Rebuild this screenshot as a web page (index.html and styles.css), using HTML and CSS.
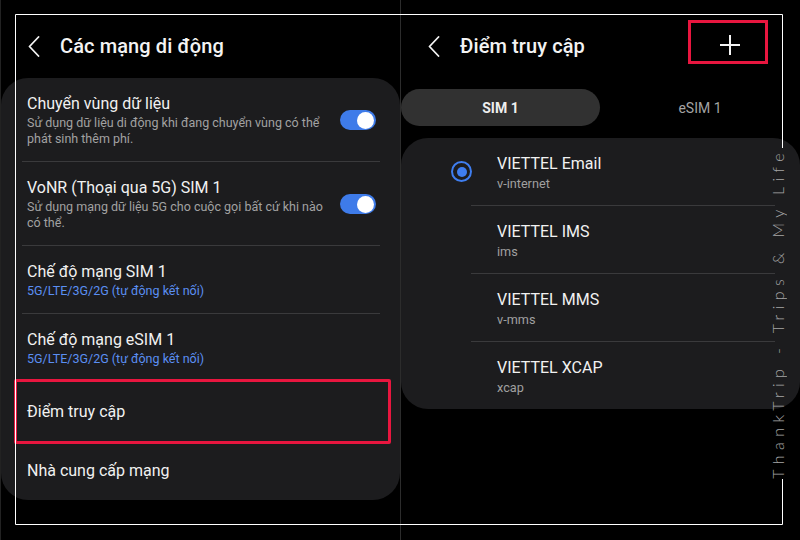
FILE: index.html
```html
<!DOCTYPE html>
<html lang="vi">
<head>
<meta charset="utf-8">
<title>Các mạng di động</title>
<link rel="stylesheet" href="styles.css">
</head>
<body>
<div class="screen">
  <section class="panel panel-left">
    <header class="bar">
      <svg class="back" width="12" height="21" viewBox="0 0 12 21"><path d="M10.5 1 L1.5 10.5 L10.5 20"/></svg>
      <h1>Các mạng di động</h1>
    </header>
    <div class="card">
      <div class="row">
        <div class="text">
          <div class="title">Chuyển vùng dữ liệu</div>
          <div class="sub">Sử dụng dữ liệu di động khi đang chuyển vùng có thể<br>phát sinh thêm phí.</div>
        </div>
        <span class="switch"></span>
      </div>
      <div class="sep"></div>
      <div class="row">
        <div class="text">
          <div class="title">VoNR (Thoại qua 5G) SIM 1</div>
          <div class="sub">Sử dụng mạng dữ liệu 5G cho cuộc gọi bất cứ khi nào<br>có thể.</div>
        </div>
        <span class="switch"></span>
      </div>
      <div class="sep"></div>
      <div class="row">
        <div class="text">
          <div class="title">Chế độ mạng SIM 1</div>
          <div class="sub link">5G/LTE/3G/2G (tự động kết nối)</div>
        </div>
      </div>
      <div class="sep"></div>
      <div class="row">
        <div class="text">
          <div class="title">Chế độ mạng eSIM 1</div>
          <div class="sub link">5G/LTE/3G/2G (tự động kết nối)</div>
        </div>
      </div>
      <div class="sep"></div>
      <div class="row single">
        <div class="title">Điểm truy cập</div>
        <span class="mark"></span>
      </div>
      <div class="row single">
        <div class="title">Nhà cung cấp mạng</div>
      </div>
    </div>
  </section>

  <section class="panel panel-right">
    <header class="bar">
      <svg class="back" width="12" height="21" viewBox="0 0 12 21"><path d="M10.5 1 L1.5 10.5 L10.5 20"/></svg>
      <h1>Điểm truy cập</h1>
      <div class="add">
        <svg width="20" height="20" viewBox="0 0 20 20"><path d="M10 0 V20 M0 10 H20"/></svg>
      </div>
    </header>
    <div class="tabs">
      <div class="tab active">SIM 1</div>
      <div class="tab">eSIM 1</div>
    </div>
    <div class="card apn-list">
      <div class="apn">
        <span class="radio"></span>
        <div class="text">
          <div class="apn-name">VIETTEL Email</div>
          <div class="apn-sub">v-internet</div>
        </div>
      </div>
      <div class="sep"></div>
      <div class="apn">
        <span class="radio empty"></span>
        <div class="text">
          <div class="apn-name">VIETTEL IMS</div>
          <div class="apn-sub">ims</div>
        </div>
      </div>
      <div class="sep"></div>
      <div class="apn">
        <span class="radio empty"></span>
        <div class="text">
          <div class="apn-name">VIETTEL MMS</div>
          <div class="apn-sub">v-mms</div>
        </div>
      </div>
      <div class="sep"></div>
      <div class="apn">
        <span class="radio empty"></span>
        <div class="text">
          <div class="apn-name">VIETTEL XCAP</div>
          <div class="apn-sub">xcap</div>
        </div>
      </div>
    </div>
  </section>

  <div class="watermark">ThankTrip - Trips &amp; My Life</div>

  <svg class="frame" width="800" height="540" viewBox="0 0 800 540">
    <path d="M15.5 14.5 H782.5 V148 M782.5 479 V524.5 H15.5 V14.5"/>
  </svg>
</div>
</body>
</html>
```

FILE: styles.css
```css
* { box-sizing: border-box; }

body {
  margin: 0;
  background: #000;
  font-family: Roboto, "Noto Sans", sans-serif;
  color: #f1f1f1;
}

.screen {
  position: relative;
  width: 800px;
  height: 540px;
  display: flex;
  background: #000;
  overflow: hidden;
}

.panel {
  width: 400px;
  height: 540px;
  display: flex;
  flex-direction: column;
}

.panel-left { border-left: 1px solid #222; }
.panel-right { border-left: 1px solid #2c2c2c; }

/* top bar */
.bar {
  height: 64px;
  margin-top: 14px;
  padding-left: 27px;
  display: flex;
  align-items: center;
}

.back path {
  fill: none;
  stroke: #f4f4f4;
  stroke-width: 1.8;
  stroke-linecap: round;
  stroke-linejoin: round;
}

.bar h1 {
  margin: 0 0 0 20px;
  font-size: 20px;
  font-weight: 500;
  letter-spacing: 0.1px;
  color: #f3f3f3;
}

.add {
  margin-left: auto;
  margin-right: 32px;
  align-self: flex-start;
  margin-top: 6px;
  width: 80px;
  height: 44px;
  border: 3px solid #e8163f;
  display: flex;
  align-items: center;
  justify-content: center;
  padding: 6px 0 0 4px;
}

.add path {
  stroke: #f4f4f4;
  stroke-width: 2;
  fill: none;
}

/* cards */
.card {
  background: #1c1c1e;
  border-radius: 27px;
}

.row {
  position: relative;
  display: flex;
  align-items: center;
  justify-content: space-between;
  padding: 15px 24px 14px 26px;
}

.row.single {
  height: 59px;
  padding-top: 0;
  padding-bottom: 0;
}

.title {
  font-size: 16px;
  line-height: 22px;
  color: #f1f1f1;
}

.sub {
  font-size: 12.5px;
  line-height: 16px;
  color: #a2a2a2;
}

.sub.link { color: #5b8ff3; }

.sep {
  height: 1px;
  margin: 0 20px 0 21px;
  background: #3a3a3c;
}

.switch {
  position: relative;
  width: 36px;
  height: 20px;
  border-radius: 10px;
  background: #3e7be9;
  flex: none;
}

.switch::after {
  content: "";
  position: absolute;
  right: 2px;
  top: 1.5px;
  width: 17px;
  height: 17px;
  border-radius: 50%;
  background: #fff;
}

.mark {
  position: absolute;
  top: -3px;
  bottom: -3px;
  left: 13px;
  right: 9px;
  border: 3px solid #e8163f;
  border-radius: 2px;
}

/* tabs */
.tabs {
  margin-top: 11px;
  height: 37px;
  display: grid;
  grid-template-columns: 199px 1fr;
}

.tab {
  display: flex;
  align-items: center;
  justify-content: center;
  font-size: 14px;
  color: #a3a3a3;
}

.tab.active {
  background: #313131;
  border-radius: 19px;
  color: #eeeeee;
  font-weight: 700;
}

/* access point list */
.apn-list {
  margin-top: 12px;
}

.apn {
  height: 67px;
  display: flex;
  align-items: center;
  padding-left: 50px;
}

.radio {
  width: 21px;
  height: 21px;
  border-radius: 50%;
  border: 2.5px solid #3f7ef0;
  display: flex;
  align-items: center;
  justify-content: center;
  flex: none;
  margin-right: 25px;
}

.radio::after {
  content: "";
  width: 10px;
  height: 10px;
  border-radius: 50%;
  background: #3f7ef0;
}

.radio.empty { visibility: hidden; }

.apn .text { padding-top: 5px; }

.apn-name {
  font-size: 16px;
  line-height: 20px;
  color: #f1f1f1;
}

.apn-sub {
  font-size: 12.7px;
  line-height: 20px;
  color: #a0a0a0;
}

.apn-list .sep {
  margin: 0 25px 0 70px;
}

/* overlays */
.watermark {
  position: absolute;
  top: 148px;
  left: 768px;
  writing-mode: vertical-rl;
  transform: rotate(180deg);
  font-family: Lato, "DejaVu Sans", sans-serif;
  font-weight: 300;
  font-size: 16px;
  line-height: 20px;
  letter-spacing: 5.45px;
  color: #a6a6a6;
  white-space: nowrap;
}

.frame {
  position: absolute;
  left: 0;
  top: 0;
  pointer-events: none;
}

.frame path {
  fill: none;
  stroke: #fff;
  stroke-width: 1;
}
```
